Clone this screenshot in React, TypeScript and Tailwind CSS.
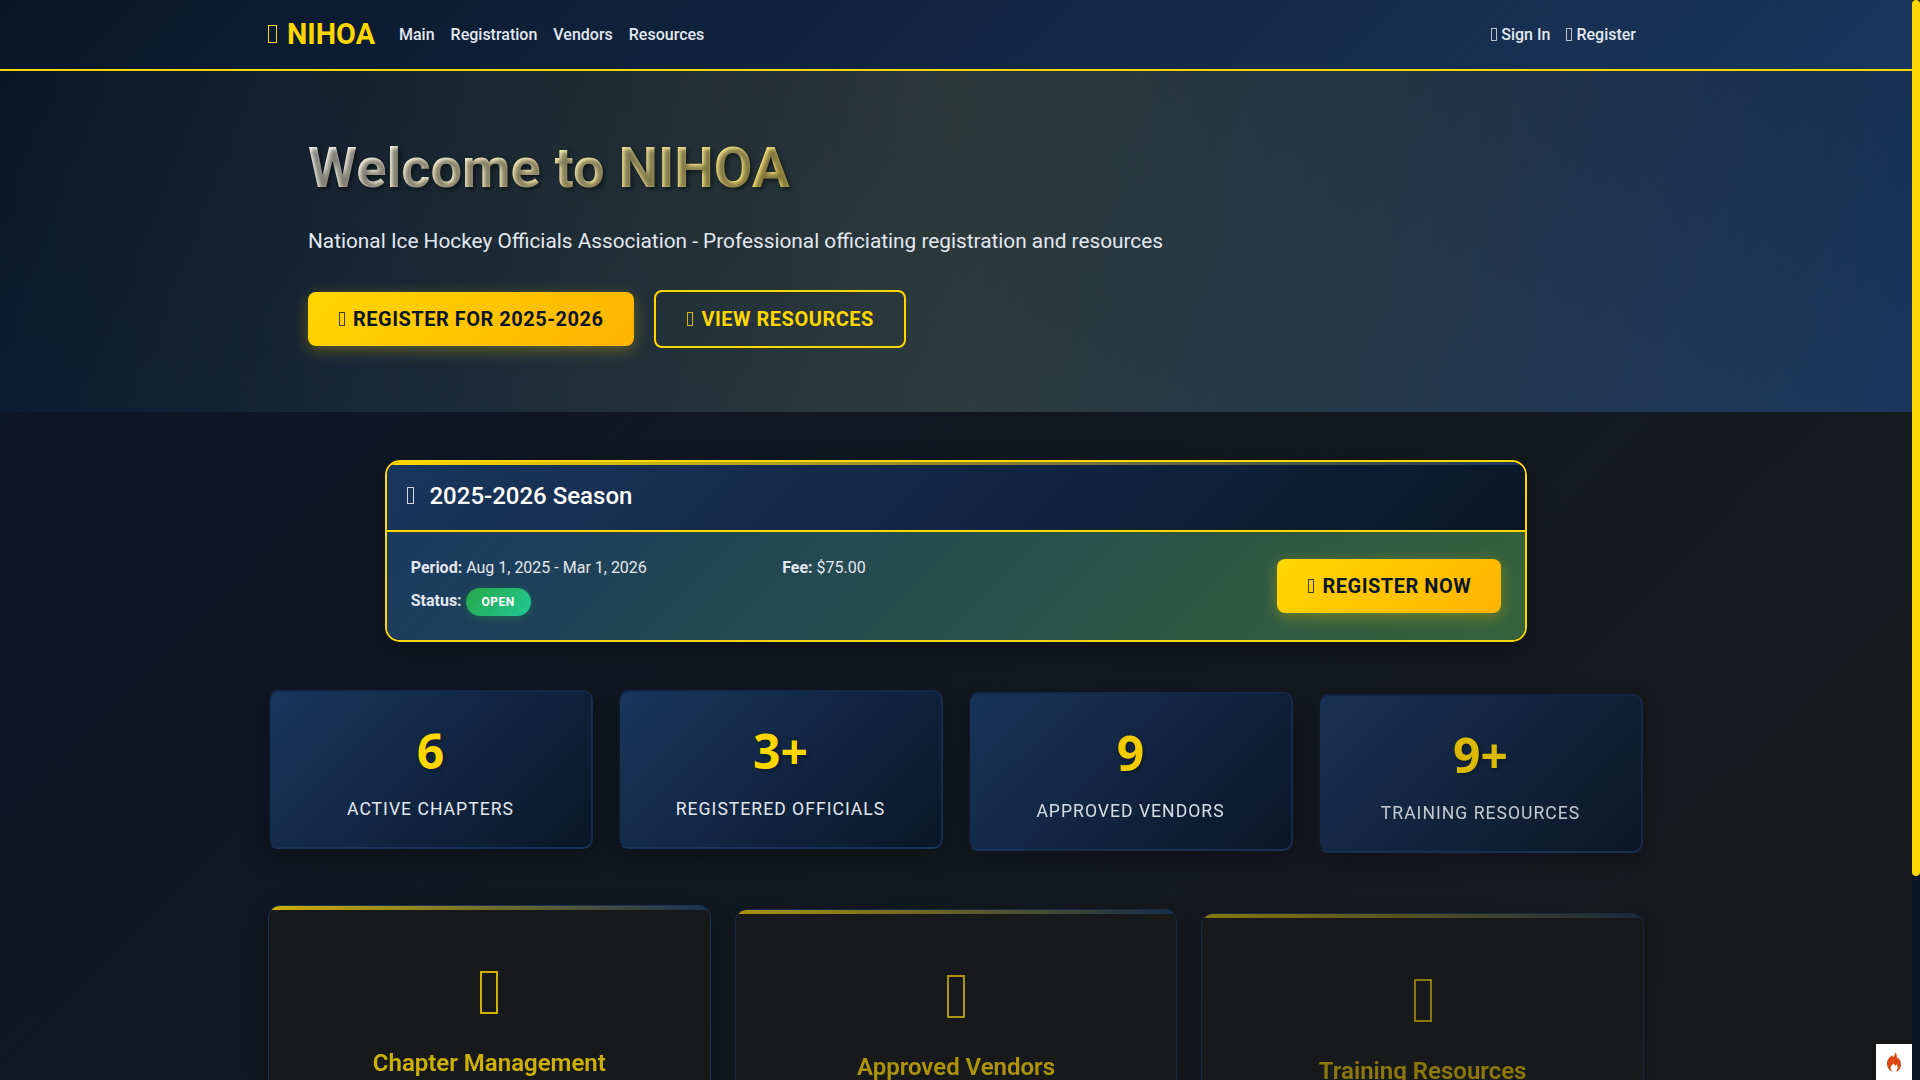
const Icon = ({ className = "" }: { className?: string }) => (
  <span className={`inline-block shrink-0 border border-current ${className}`} />
);

const Flame = () => (
  <svg viewBox="0 0 16 20" className="w-[16px] h-[20px]">
    <path
      fill="#dd4814"
      d="M9 0c.6 2.6-.8 4-2 5.2C6.6 4.400 6.300 3.900 6.400 3 3.600 5 1 7.700 1 11.500 1 15.500 3.600 19 7 20c-1.500-1-2.600-2.500-2.400-4.200.2-1.800 1.800-2.900 2.800-4.500.9 1 1.300 1.700 1.700 2.700.6-.4 1.100-1 1.200-1.800 1 1.200 1.500 2.300 1.300 3.700-.2 1.700-1.100 3-2.600 4C13 19.200 15 15.800 15 12.200c0-3.800-2.200-5.400-3.300-7.300-.2 1-.5 1.500-1 2C11.200 4.400 10.900 1.800 9 0z"
    />
  </svg>
);

const stats = [
  { n: "6", l: "ACTIVE CHAPTERS", c: "translate-y-0 opacity-100" },
  { n: "3+", l: "REGISTERED OFFICIALS", c: "translate-y-0 opacity-100" },
  { n: "9", l: "APPROVED VENDORS", c: "translate-y-[2px] opacity-95" },
  { n: "9+", l: "TRAINING RESOURCES", c: "translate-y-[4px] opacity-85" },
];

const features = [
  { t: "Chapter Management", c: "translate-y-0 opacity-80" },
  { t: "Approved Vendors", c: "translate-y-[4px] opacity-65" },
  { t: "Training Resources", c: "translate-y-[8px] opacity-50" },
];

export default function App() {
  return (
    <div className="h-screen overflow-hidden flex font-['Roboto',sans-serif] text-[16px] leading-[1.5] text-[#e2e8f0] bg-[#141820]">
      <div className="relative flex-1 min-w-0 h-full overflow-hidden">
      <div className="min-h-[1331px] bg-[linear-gradient(135deg,#0a1628_0%,#1a1a1a_100%)]">
        <nav className="h-[71px] border-b-2 border-[#ffd700] bg-[linear-gradient(135deg,#0a1628,#1a365d)]">
          <div className="w-[1400px] mx-auto px-3 h-full flex items-center">
            <a className="flex items-center text-[28.8px] font-bold text-[#ffd700] mr-4 leading-none">
              <Icon className="w-[9px] h-[18px] mr-[10px]" />
              NIHOA
            </a>
            <div className="flex font-medium text-[#e2e8f0]">
              <a className="px-2">Main</a>
              <a className="px-2">Registration</a>
              <a className="px-2">Vendors</a>
              <a className="px-2">Resources</a>
            </div>
            <div className="ml-auto flex font-medium text-[#e2e8f0]">
              <a className="px-2 flex items-center"><Icon className="w-[6px] h-[12.5px] mr-[4px] opacity-80" />Sign In</a>
              <a className="px-2 flex items-center"><Icon className="w-[6px] h-[12.5px] mr-[4px] opacity-80" />Register</a>
            </div>
          </div>
        </nav>

        <section className="h-[341px] pt-[64px] bg-[linear-gradient(90deg,transparent,rgba(255,215,0,0.11),transparent),linear-gradient(135deg,#0a1628,#1a365d)]">
          <div className="w-[1400px] mx-auto px-3">
            <div className="px-10">
              <h1 className="w-[880px] text-[56px] leading-[1.2] font-bold mb-[23px] bg-[linear-gradient(135deg,#ffffff,#ffd700)] bg-clip-text text-transparent [text-shadow:2px_2px_4px_rgba(0,0,0,0.5)]">
                Welcome to NIHOA
              </h1>
              <p className="text-[20.8px] leading-[1.6] font-normal mb-[32px] text-[#e2e8f0]">
                National Ice Hockey Officials Association - Professional officiating registration and resources
              </p>
              <div className="flex items-center gap-5">
                <a className="h-[54px] w-[326.4px] px-[30px] flex items-center rounded-lg text-[20px] font-bold tracking-[0.5px] text-[#0a1628] bg-[linear-gradient(135deg,#ffd700,#ffb300)] shadow-[0_4px_15px_rgba(255,215,0,0.3)]">
                  <Icon className="w-[6.5px] h-[14px] ml-[0.5px] mr-[8px] opacity-80" />
                  REGISTER FOR 2025-2026
                </a>
                <a className="h-[58px] px-[30px] flex items-center rounded-lg border-2 border-[#ffd700] text-[20px] font-bold tracking-[0.5px] text-[#ffd700]">
                  <Icon className="w-[6.5px] h-[14px] ml-[0.5px] mr-[8px] opacity-80" />
                  VIEW RESOURCES
                </a>
              </div>
            </div>
          </div>
        </section>

        <main className="w-[1400px] mx-auto px-3 pt-[48px]">
          <div className="w-[1142.67px] mx-auto relative overflow-hidden rounded-[15px] border-2 border-[#ffd700] shadow-[0_8px_25px_rgba(0,0,0,0.3)]">
            <div className="h-[3px] bg-[linear-gradient(90deg,#ffd700,#1a365d)]" />
            <div className="h-[67px] pl-[20px] pb-1 flex items-center border-b-2 border-[#ffd700] bg-[linear-gradient(135deg,#1a365d,#0a1628)] text-[24px] font-medium text-white">
              <Icon className="w-[7px] h-[16.5px] mr-[15.8px] opacity-80" />
              2025-2026 Season
            </div>
            <div className="h-[108px] px-6 flex items-center bg-[linear-gradient(135deg,#1a3a5f,#37633a)]">
              <div className="flex-1">
                <div className="flex">
                  <div className="w-[371.5px]">
                    <b className="font-bold">Period:</b> Aug 1, 2025 - Mar 1, 2026
                  </div>
                  <div>
                    <b className="font-bold">Fee:</b> $75.00
                  </div>
                </div>
                <div className="mt-[8px] flex items-center">
                  <b className="font-bold mr-[4px] mb-[2px]">Status:</b>
                  <span className="h-[28px] w-[65px] flex items-center justify-center rounded-full text-[12px] font-bold tracking-[0.5px] text-white bg-[linear-gradient(135deg,#28a745,#20c997)] shadow-[0_2px_8px_rgba(40,167,69,0.3)]">
                    OPEN
                  </span>
                </div>
              </div>
              <a className="h-[54px] w-[224px] flex items-center justify-center rounded-lg text-[20px] font-bold tracking-[0.5px] text-[#0a1628] bg-[linear-gradient(135deg,#ffd700,#ffb300)] shadow-[0_4px_15px_rgba(255,215,0,0.3)]">
                <Icon className="w-[6.5px] h-[14px] ml-[0.5px] mr-[8px] opacity-80" />
                REGISTER NOW
              </a>
            </div>
          </div>

          <div className="grid grid-cols-4 gap-6 mt-[48px]">
            {stats.map((s) => (
              <div
                key={s.l}
                className={`h-[159px] mr-[1px] rounded-[10px] border-l-2 border-l-transparent [background-clip:padding-box] border-r-2 border-b-2 border-r-[#172c4e] border-b-[#1a3359] border-t-[2px] border-t-[#14284a] bg-[linear-gradient(135deg,#1a365d,#0a1628)] shadow-[0_8px_25px_rgba(0,0,0,0.3)] flex flex-col items-center pt-[24px] ${s.c}`}
              >
                <div className="font-['Open_Sans'] text-[48px] leading-[70px] font-bold text-[#ffd700] [text-shadow:2px_2px_4px_rgba(0,0,0,0.3)]">{s.n}</div>
                <div className="mt-[10px] text-[17.6px] tracking-[1px] text-[#e2e8f0]">{s.l}</div>
              </div>
            ))}
          </div>

          <div className="grid grid-cols-3 gap-6 mt-[56px]">
            {features.map((f) => (
              <div
                key={f.t}
                className={`relative h-[340px] overflow-hidden rounded-xl border border-[#1a365d] bg-[#1a1a1a] shadow-[0_8px_25px_rgba(0,0,0,0.3)] flex flex-col items-center pt-[65px] ${f.c}`}
              >
                <div className="absolute top-0 left-0 right-0 h-[4px] bg-[linear-gradient(90deg,#ffd700,#1a365d)]" />
                <Icon className="w-[18px] h-[43px] border-2 text-[#ffd700]" />
                <h3 className="mt-[31px] text-[24px] font-semibold text-[#ffd700]">{f.t}</h3>
              </div>
            ))}
          </div>
        </main>
      </div>
      <div className="absolute right-0 bottom-0 w-[36px] h-[36px] bg-white flex items-center justify-center shadow-[0_0_8px_rgba(0,0,0,0.4)]">
        <Flame />
      </div>
      </div>
      <div className="w-2 shrink-0 h-full bg-[#0a1628]">
        <div className="h-[876px] bg-[#ffd700] rounded" />
      </div>
    </div>
  );
}
